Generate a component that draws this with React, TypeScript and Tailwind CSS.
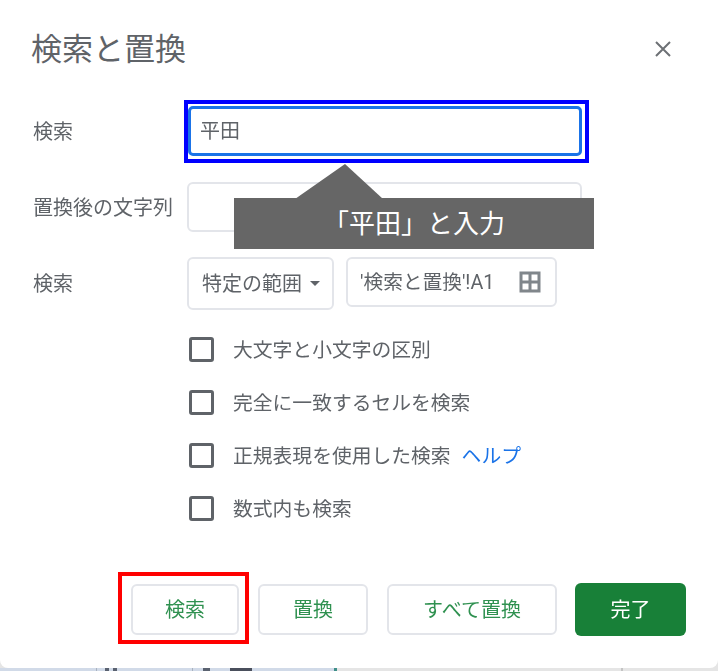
const FONT = "font-['Roboto','Noto_Sans_CJK_JP',sans-serif]";

function Check({ children }: { children: React.ReactNode }) {
  return (
    <div className="flex items-center h-[25px] text-[19.8px] text-[#5f6368]">
      <div className="w-[25px] h-[25px] border-[3px] border-[#5f6368] rounded-[3px] mr-[19px] shrink-0" />
      <div className="whitespace-nowrap leading-none pt-[2px]">{children}</div>
    </div>
  );
}

function Btn({ w, children }: { w: string; children: React.ReactNode }) {
  return (
    <div className={`${w} h-[51px] border-2 border-[#e3e5ea] rounded-[6px] flex items-center justify-center text-[20px] text-[#2f9150]`}>
      {children}
    </div>
  );
}

export default function App() {
  return (
    <div className={`relative w-[718px] h-[671px] overflow-hidden bg-[#e5e5e5] ${FONT}`}>
      <div className="h-[668px] bg-white rounded-b-[8px] flex flex-col pl-[33px] blur-[0.5px]">
        <div className="h-[98px] mb-[8px] flex items-center justify-between pr-[46px] -ml-[2px]">
          <div className="text-[31px] text-[#5f6368] leading-none">検索と置換</div>
          <svg width="18" height="18" viewBox="0 0 18 18" className="-mt-[1px]">
            <path d="M2 2L16 16M16 2L2 16" stroke="#6d7175" strokeWidth="2" fill="none" />
          </svg>
        </div>

        <div className="flex items-center h-[50px] text-[#5f6368] text-[20px]">
          <div className="w-[155px] pt-[2px]">検索</div>
          <div className="w-[394px] h-[50px] border-[3px] border-[#1a73e8] rounded-[5px] flex items-center pl-[9px]">平田</div>
        </div>

        <div className="flex items-center h-[50px] mt-[26px] text-[#5f6368] text-[20px]">
          <div className="w-[154px] whitespace-nowrap pt-[2px]">置換後の文字列</div>
          <div className="w-[395px] h-[50px] border-2 border-[#e3e5ea] rounded-[6px]" />
        </div>

        <div className="flex items-start h-[53px] mt-[25px] text-[#5f6368] text-[20px]">
          <div className="w-[154px] h-[53px] flex items-center pt-[1px]">検索</div>
          <div className="w-[147px] h-[53px] border-2 border-[#e3e5ea] rounded-[6px] flex items-center pl-[13px]">
            <span className="whitespace-nowrap">特定の範囲</span>
            <span className="ml-[8px] w-0 h-0 border-x-[5px] border-x-transparent border-t-[5px] border-t-[#5f6368]" />
          </div>
          <div className="w-[211px] h-[50px] ml-[12px] border-2 border-[#e3e5ea] rounded-[6px] flex items-center pl-[12px] pr-[14px] justify-between">
            <span className="whitespace-nowrap text-[19.7px] pt-[1px]">'検索と置換'!A1</span>
            <svg width="22" height="22" viewBox="0 0 22 22" className="shrink-0">
              <path d="M2 2h18v18H2zM2 11h18M11 2v18" stroke="#80868b" strokeWidth="3" fill="none" />
            </svg>
          </div>
        </div>

        <div className="flex flex-col ml-[156px] mt-[27px] gap-y-[28px]">
          <Check>大文字と小文字の区別</Check>
          <Check>完全に一致するセルを検索</Check>
          <Check>
            正規表現を使用した検索<span className="ml-[11px] text-[#1a73e8]">ヘルプ</span>
          </Check>
          <Check>数式内も検索</Check>
        </div>

        <div className="flex justify-end items-center mt-[62px] pr-[32px] gap-x-[19px]">
          <Btn w="w-[108px]">検索</Btn>
          <Btn w="w-[110px]">置換</Btn>
          <Btn w="w-[170px]">すべて置換</Btn>
          <div className="w-[111px] h-[53px] -ml-[1px] bg-[#188038] rounded-[6px] flex items-center justify-center text-[20px] text-white">完了</div>
        </div>
      </div>

      <svg width="718" height="3" viewBox="0 0 718 3" className="block">
        <rect x="0" y="0" width="335" height="3" fill="#d1dae8" />
        <rect x="335" y="0" width="383" height="3" fill="#e5e5e5" />
        <rect x="96" y="0" width="1" height="3" fill="#a9b2bf" />
        <rect x="192" y="0" width="1" height="3" fill="#a9b2bf" />
        <rect x="621" y="0" width="2" height="3" fill="#c4c4c4" />
        <rect x="105" y="0" width="4" height="3" fill="#5a6270" />
        <rect x="113" y="0" width="4" height="3" fill="#5a6270" />
        <rect x="203" y="0" width="7" height="3" fill="#5a6270" />
        <rect x="230" y="0" width="22" height="3" fill="#4a4f5c" />
        <rect x="334" y="0" width="3" height="3" fill="#3f8f88" />
      </svg>

      {/* Annotations laid over the dialog */}
      <div className="absolute left-[184px] top-[100px] w-[405px] h-[63px] border-4 border-[#0000ff]" />
      <div className="absolute left-[118px] top-[572px] w-[131px] h-[72px] border-4 border-[#ff0000]" />
      <svg className="absolute left-[290px] top-[163px]" width="100" height="36" viewBox="0 0 100 36">
        <path d="M5 36L55 1L93 36Z" fill="#666666" />
      </svg>
      <div className="absolute left-[234px] top-[198px] w-[360px] h-[51px] bg-[#666666] flex items-center justify-center pt-[1px] text-[26px] text-white">
        「平田」と入力
      </div>
    </div>
  );
}
